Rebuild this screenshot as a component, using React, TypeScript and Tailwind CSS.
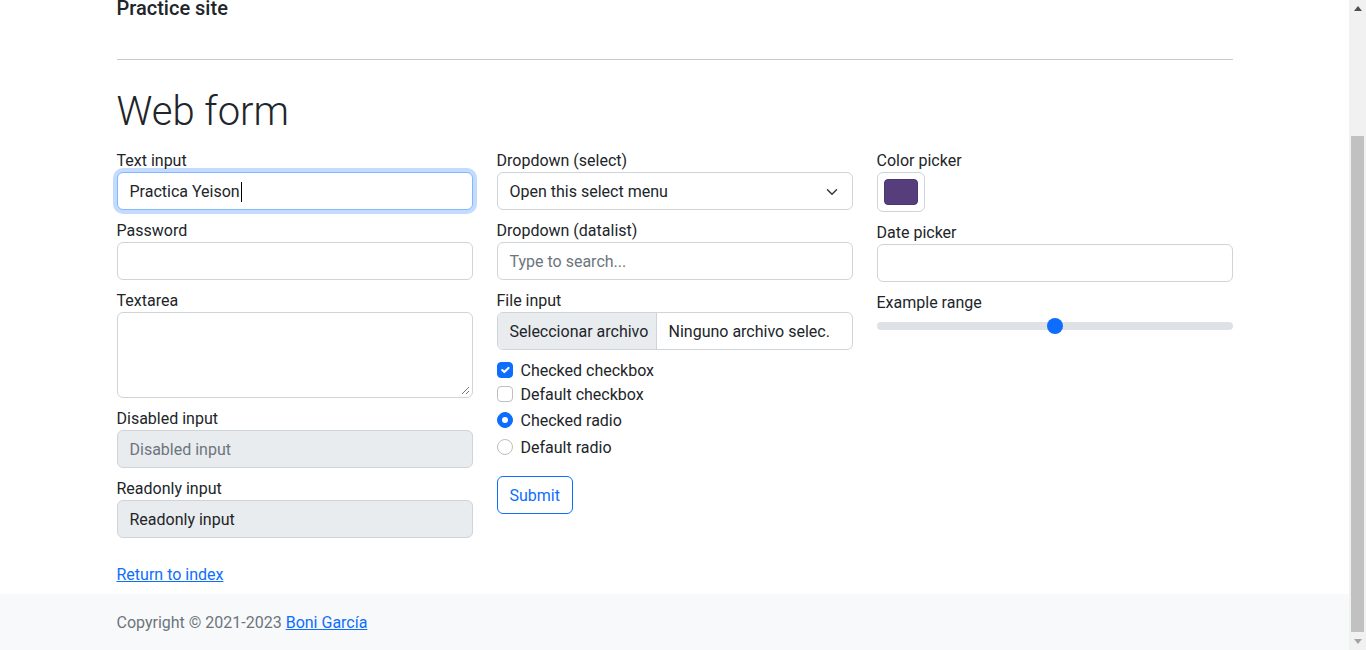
import type { ReactNode } from 'react';

const font = { fontFamily: 'Roboto, "Noto Sans", "Liberation Sans", sans-serif' };

function Field({ label, children }: { label: string; children: ReactNode }) {
  return (
    <label className="block mb-2">
      <span className="block h-6 pt-px leading-6">{label}</span>
      {children}
    </label>
  );
}

// base look of a bootstrap form-control, background is set per use
const box = 'h-[38px] w-full rounded-[6px] border border-[#ced4da] px-3 pt-px flex items-center';

function Check({ type, checked, label, extra = '' }: { type: 'checkbox' | 'radio'; checked?: boolean; label: string; extra?: string }) {
  const round = type === 'radio' ? 'rounded-full' : 'rounded-[4px]';
  return (
    <div className={`flex items-center gap-2 h-6 ${extra}`}>
      {checked ? (
        <span className={`w-4 h-4 ${round} bg-[#0d6efd] border border-[#0d6efd] flex items-center justify-center`}>
          {type === 'checkbox' ? (
            <svg width="16" height="16" viewBox="0 0 20 20">
              <path d="m6 10 3 3 6-6" fill="none" stroke="#fff" strokeWidth="3" strokeLinecap="round" strokeLinejoin="round" />
            </svg>
          ) : (
            <span className="w-[6px] h-[6px] rounded-full bg-white" />
          )}
        </span>
      ) : (
        <span className={`w-4 h-4 ${round} border border-[#bfbfbf] bg-white`} />
      )}
      <span className="pt-px">{label}</span>
    </div>
  );
}

export default function App() {
  return (
    <div className="h-[650px] overflow-hidden flex bg-white text-[16px] text-[#212529]" style={font}>
      <div className="flex-1 flex flex-col">
        <div className="w-[1140px] mx-auto px-3">
          <div className="-mt-1 h-6 text-[20px] leading-6 font-medium">Practice site</div>
          <div className="mt-[39px] h-px bg-[#c8c9ca]" />
          <h1 className="mt-[28px] mb-[-2px] text-[40px] leading-[48px] font-light">Web form</h1>

          <div className="mt-[14px] grid grid-cols-3 gap-x-6">
            <div>
              <Field label="Text input">
                <div className="h-[38px] w-full rounded-[6px] border border-[#86b7fe] bg-white px-3 pt-px flex items-center shadow-[0_0_0_4px_rgba(13,110,253,0.25)]">
                  <span>Practica Yeison</span>
                  <span className="ml-px w-px h-[20px] bg-black" />
                </div>
              </Field>
              <Field label="Password">
                <div className={`${box} bg-white`} />
              </Field>
              <Field label="Textarea">
                <div className="relative h-[86px] w-full rounded-[6px] border border-[#ced4da] bg-white">
                  <svg className="absolute right-[2px] bottom-[2px]" width="9" height="9" viewBox="0 0 9 9">
                    <path d="M8 1 1 8M8 5 5 8" stroke="#7a7a7a" strokeWidth="1" />
                  </svg>
                </div>
              </Field>
              <Field label="Disabled input">
                <div className={`${box} bg-[#e9ecef] text-[#6c757d]`}>Disabled input</div>
              </Field>
              <Field label="Readonly input">
                <div className={`${box} bg-[#e9ecef]`}>Readonly input</div>
              </Field>
            </div>

            <div>
              <Field label="Dropdown (select)">
                <div className={`${box} bg-white justify-between`}>
                  <span>Open this select menu</span>
                  <svg width="16" height="12" viewBox="0 0 16 16">
                    <path d="m2 5 6 6 6-6" fill="none" stroke="#343a40" strokeWidth="2" strokeLinecap="round" strokeLinejoin="round" />
                  </svg>
                </div>
              </Field>
              <Field label="Dropdown (datalist)">
                <div className={`${box} bg-white text-[#6c757d]`}>Type to search...</div>
              </Field>
              <Field label="File input">
                <div className="h-[38px] w-full rounded-[6px] border border-[#ced4da] bg-white flex overflow-hidden">
                  <span className="w-[159px] shrink-0 bg-[#e9ecef] border-r border-[#ced4da] px-3 pt-px flex items-center whitespace-nowrap">Seleccionar archivo</span>
                  <span className="px-3 pt-px flex items-center whitespace-nowrap">Ninguno archivo selec.</span>
                </div>
              </Field>
              <Check type="checkbox" checked label="Checked checkbox" />
              <Check type="checkbox" label="Default checkbox" />
              <Check type="radio" checked label="Checked radio" extra="mt-[2px]" />
              <Check type="radio" label="Default radio" extra="mt-[3px]" />
              <button className="mt-[17px] h-[38px] px-3 pt-px rounded-[6px] border border-[#0d6efd] text-[#0d6efd] bg-white">Submit</button>
            </div>

            <div>
              <Field label="Color picker">
                <div className="w-12 h-10 rounded-[6px] border border-[#ced4da] bg-white p-[6px]">
                  <div className="w-[34px] h-[26px] rounded-[4px] bg-[#563d7c] border border-[#4b3670]" />
                </div>
              </Field>
              <Field label="Date picker">
                <div className={`${box} bg-white`} />
              </Field>
              <Field label="Example range">
                <div className="relative h-6 flex items-center">
                  <div className="w-full h-2 rounded-full bg-[#dee2e6]" />
                  <span className="absolute left-[170px] top-1 w-4 h-4 rounded-full bg-[#0d6efd]" />
                </div>
              </Field>
            </div>
          </div>

          <div className="mt-4 h-6 pt-px leading-6">
            <a href="#" className="text-[#0d6efd] underline">Return to index</a>
          </div>
        </div>

        <footer className="mt-2 flex-1 bg-[#f8f9fa]">
          <div className="w-[1140px] mx-auto px-3 pt-[17px] leading-6 text-[#6c757d]">
            Copyright © 2021-2023 <a href="#" className="text-[#0d6efd] underline">Boni García</a>
          </div>
        </footer>
      </div>

      <div className="w-[17px] shrink-0 bg-[#f1f1f1] flex flex-col items-center">
        <div className="h-[17px] flex items-center justify-center">
          <svg width="8" height="5" viewBox="0 0 8 5"><path d="M4 0 8 5H0z" fill="#505050" /></svg>
        </div>
        <div className="mt-[119px] w-[13px] h-[496px] bg-[#c1c1c1]" />
        <div className="flex-1" />
        <div className="h-[17px] flex items-center justify-center">
          <svg width="8" height="5" viewBox="0 0 8 5"><path d="M0 0h8L4 5z" fill="#a3a3a3" /></svg>
        </div>
      </div>
    </div>
  );
}
